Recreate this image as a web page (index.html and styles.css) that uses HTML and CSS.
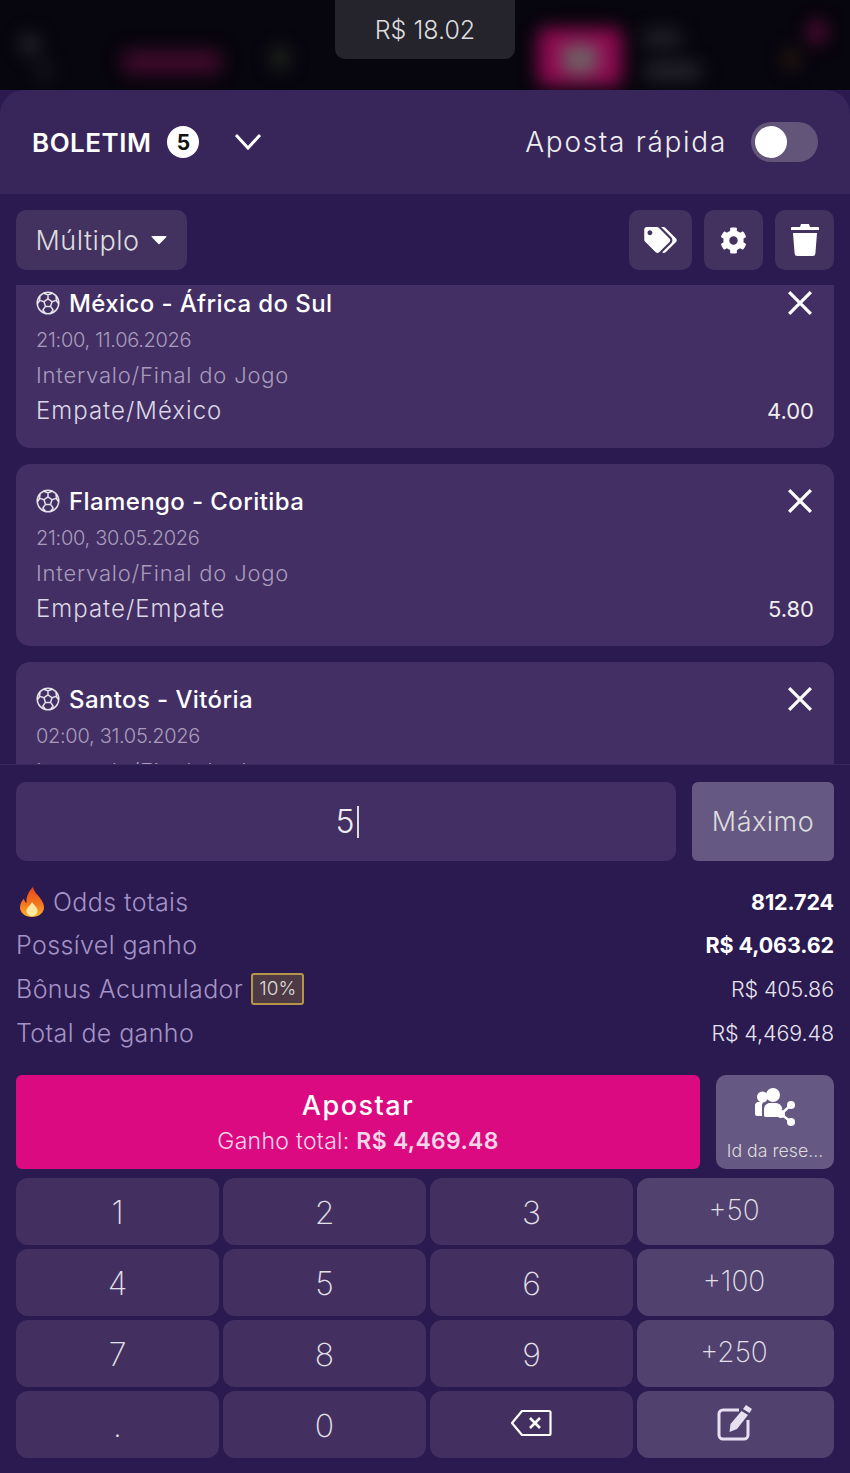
FILE: index.html
```html
<!DOCTYPE html>
<html lang="pt">
<head>
<meta charset="utf-8">
<title>Boletim</title>
<link rel="stylesheet" href="styles.css">
</head>
<body>
<div class="page">
  <div class="backdrop">
    <div class="blurs">
      <i class="blob b1"></i><i class="blob b2"></i><i class="blob b3"></i><i class="blob b4"></i>
      <i class="blob b5"></i><i class="blob b6"></i><i class="blob b7"></i><i class="blob b7b"></i><i class="blob b8"></i><i class="blob b9"></i>
    </div>
    <div class="balance">R$ 18.02</div>
  </div>
  <main class="sheet">
    <header class="sheet-head">
      <span class="title">BOLETIM</span>
      <span class="count">5</span>
      <svg class="chevron" viewBox="0 0 28 18"><path d="M2 2l12 13L26 2" fill="none" stroke="#fff" stroke-width="3"/></svg>
      <span class="quick">Aposta rápida</span>
      <span class="switch"><i class="knob"></i></span>
    </header>
    <div class="toolbar">
      <button class="tool select">Múltiplo<svg class="caret" viewBox="0 0 16 10"><path d="M1 1h14a.6.6 0 0 1 .4 1L8.6 9a.8.8 0 0 1-1.2 0L.6 2A.6.6 0 0 1 1 1z" fill="#fff"/></svg></button>
      <span class="spacer"></span>
      <button class="tool tag"><svg viewBox="0 0 640 512" class="ic-tag"><path fill="#fff" d="M497.941 225.941L286.059 14.059A48 48 0 0 0 252.118 0H48C21.49 0 0 21.49 0 48v204.118a48 48 0 0 0 14.059 33.941l211.882 211.882c18.744 18.745 49.136 18.746 67.882 0l204.118-204.118c18.745-18.745 18.745-49.137 0-67.882zM112 160c-26.51 0-48-21.49-48-48s21.49-48 48-48 48 21.49 48 48-21.49 48-48 48zm513.941 133.823L421.823 497.941c-18.745 18.745-49.137 18.745-67.882 0l-.36-.36L527.64 323.522c16.999-16.999 26.36-39.6 26.36-63.64s-9.362-46.641-26.36-63.64L331.397 0h48.721a48 48 0 0 1 33.941 14.059l211.882 211.882c18.745 18.745 18.745 49.137 0 67.882z"/></svg></button>
      <button class="tool gear"><svg viewBox="0 0 512 512" class="ic-gear"><path fill="#fff" d="M487.4 315.7l-42.6-24.6c4.3-23.2 4.3-47 0-70.2l42.6-24.6c4.9-2.8 7.1-8.6 5.5-14-11.1-35.6-30-67.8-54.7-94.6-3.8-4.1-10-5.1-14.8-2.3L380.8 110c-17.9-15.4-38.5-27.3-60.8-35.1V25.8c0-5.6-3.9-10.5-9.4-11.7-36.7-8.2-74.3-7.8-109.2 0-5.5 1.2-9.4 6.1-9.4 11.7V75c-22.2 7.9-42.8 19.8-60.8 35.1L88.7 85.5c-4.9-2.8-11-1.9-14.8 2.3-24.7 26.7-43.6 58.9-54.7 94.6-1.7 5.4.6 11.2 5.5 14L67.3 221c-4.3 23.2-4.3 47 0 70.2l-42.6 24.6c-4.9 2.8-7.1 8.6-5.5 14 11.1 35.6 30 67.8 54.7 94.6 3.8 4.1 10 5.1 14.8 2.3l42.6-24.6c17.9 15.4 38.5 27.3 60.8 35.1v49.2c0 5.6 3.9 10.5 9.4 11.7 36.7 8.2 74.3 7.8 109.2 0 5.5-1.2 9.4-6.1 9.4-11.7v-49.2c22.2-7.9 42.8-19.8 60.8-35.1l42.6 24.6c4.9 2.8 11 1.9 14.8-2.3 24.7-26.7 43.6-58.9 54.7-94.6 1.5-5.5-.7-11.3-5.6-14.1zM256 336c-44.1 0-80-35.9-80-80s35.9-80 80-80 80 35.9 80 80-35.9 80-80 80z"/></svg></button>
      <button class="tool bin"><svg viewBox="0 0 28 32" class="ic-bin"><path fill="#fff" d="M10 0h8l1 3h8a1 1 0 0 1 1 1v2H0V4a1 1 0 0 1 1-1h8zM2 9h24l-1.6 20.5A2.6 2.6 0 0 1 21.8 32H6.2a2.6 2.6 0 0 1-2.6-2.5z"/></svg></button>
    </div>
    <section class="slips">
      <div class="slip-list">
        <article class="slip">
          <div class="slip-top">
            <svg class="ball" viewBox="0 0 24 24"><g fill="none" stroke="#fff" stroke-width="1.5" stroke-opacity=".85"><circle cx="12" cy="12" r="10.8"/><path d="M12 7.8l4 2.9-1.500 4.700h-5L8 10.700zM12 7.800V3.600M16 10.700l4-1.300M14.500 15.400l2.500 3.400M9.500 15.400l-2.500 3.400M8 10.700l-4-1.300M8 2.200L12 4l4-1.800M20 5.500l.5 4.500 2 2.500M4 5.500L3.500 10l-2 2.500M6.500 18.500L9 21.800M17.500 18.500L15 21.800"/></g></svg>
            <h2 class="match">México - África do Sul</h2>
            <svg class="close" viewBox="0 0 24 24"><path d="M2 2l20 20M22 2L2 22" stroke="#fff" stroke-width="3" fill="none"/></svg>
          </div>
          <div class="when">21:00, 11.06.2026</div>
          <div class="market">Intervalo/Final do Jogo</div>
          <div class="pick"><span>Empate/México</span><span class="odd">4.00</span></div>
        </article>
        <article class="slip">
          <div class="slip-top">
            <svg class="ball" viewBox="0 0 24 24"><g fill="none" stroke="#fff" stroke-width="1.5" stroke-opacity=".85"><circle cx="12" cy="12" r="10.8"/><path d="M12 7.8l4 2.9-1.500 4.700h-5L8 10.700zM12 7.800V3.600M16 10.700l4-1.300M14.500 15.400l2.500 3.400M9.500 15.400l-2.500 3.400M8 10.700l-4-1.300M8 2.200L12 4l4-1.800M20 5.500l.5 4.500 2 2.500M4 5.500L3.500 10l-2 2.500M6.500 18.500L9 21.800M17.500 18.500L15 21.800"/></g></svg>
            <h2 class="match">Flamengo - Coritiba</h2>
            <svg class="close" viewBox="0 0 24 24"><path d="M2 2l20 20M22 2L2 22" stroke="#fff" stroke-width="3" fill="none"/></svg>
          </div>
          <div class="when">21:00, 30.05.2026</div>
          <div class="market">Intervalo/Final do Jogo</div>
          <div class="pick"><span>Empate/Empate</span><span class="odd">5.80</span></div>
        </article>
        <article class="slip">
          <div class="slip-top">
            <svg class="ball" viewBox="0 0 24 24"><g fill="none" stroke="#fff" stroke-width="1.5" stroke-opacity=".85"><circle cx="12" cy="12" r="10.8"/><path d="M12 7.8l4 2.9-1.500 4.700h-5L8 10.700zM12 7.800V3.600M16 10.700l4-1.300M14.500 15.400l2.500 3.400M9.500 15.400l-2.500 3.400M8 10.700l-4-1.300M8 2.200L12 4l4-1.800M20 5.500l.5 4.500 2 2.500M4 5.500L3.500 10l-2 2.500M6.500 18.500L9 21.800M17.500 18.500L15 21.800"/></g></svg>
            <h2 class="match">Santos - Vitória</h2>
            <svg class="close" viewBox="0 0 24 24"><path d="M2 2l20 20M22 2L2 22" stroke="#fff" stroke-width="3" fill="none"/></svg>
          </div>
          <div class="when">02:00, 31.05.2026</div>
          <div class="market">Intervalo/Final do Jogo</div>
        </article>
      </div>
    </section>
    <div class="stake-row">
      <div class="stake"><span>5</span><i class="cursor"></i></div>
      <button class="max">Máximo</button>
    </div>
    <dl class="totals">
      <div class="row">
        <dt><svg class="flame" viewBox="0 0 24 30"><defs><linearGradient id="fl" x1="0" y1="0" x2="0" y2="1"><stop offset="0" stop-color="#e8451c"/><stop offset=".6" stop-color="#f47a1f"/><stop offset="1" stop-color="#ffb52e"/></linearGradient></defs><path fill="url(#fl)" d="M13 0c1 5 4 7 7 11 3 4 4 7 4 9.500C24 26 18.500 30 12 30S0 26 0 20.500c0-4 2-7 4-9 .3 2 1 3.500 2.500 4.500C6 9 9 4 13 0z"/><path fill="#ffe9a0" d="M12 15c1.500 3 5.500 5 5.500 9 0 3-2.500 5-5.500 5s-5.500-2-5.500-5c0-4 4-5 5.500-9z"/></svg>Odds totais</dt>
        <dd class="strong">812.724</dd>
      </div>
      <div class="row"><dt>Possível ganho</dt><dd class="strong">R$ 4,063.62</dd></div>
      <div class="row"><dt>Bônus Acumulador<span class="pct">10%</span></dt><dd>R$ 405.86</dd></div>
      <div class="row"><dt>Total de ganho</dt><dd>R$ 4,469.48</dd></div>
    </dl>
    <div class="actions">
      <button class="bet"><span class="bet-title">Apostar</span><span class="bet-sub">Ganho total: <b>R$ 4,469.48</b></span></button>
      <button class="reserve">
        <svg class="ic-share" viewBox="0 0 42 38"><g fill="#fff"><circle cx="8.500" cy="9" r="5.500"/><path d="M1 17c0-1.500 1.500-3 3-3h5l-1 3v11H3c-1 0-2-1-2-2z"/><circle cx="19" cy="7" r="7"/><path d="M10 22c0-5 3-7 6-7h6c3 0 5.500 2 6.500 6L24 24.500V29H12c-1.500 0-2-1-2-2z"/><circle cx="37" cy="17" r="4"/><circle cx="27" cy="26" r="4"/><circle cx="37" cy="34" r="4"/></g><path d="M37 17L27 26l10 8" fill="none" stroke="#fff" stroke-width="2.500"/></svg>
        <span class="reserve-label">Id da rese...</span>
      </button>
    </div>
    <div class="keypad">
      <button class="key">1</button><button class="key">2</button><button class="key">3</button><button class="key alt">+50</button>
      <button class="key">4</button><button class="key">5</button><button class="key">6</button><button class="key alt">+100</button>
      <button class="key">7</button><button class="key">8</button><button class="key">9</button><button class="key alt">+250</button>
      <button class="key">.</button><button class="key">0</button>
      <button class="key icon"><svg class="ic-back" viewBox="0 0 42 28"><path d="M12 2h27a1.500 1.500 0 0 1 1.500 1.500v21A1.500 1.500 0 0 1 39 26H12L2 14z" fill="none" stroke="#fff" stroke-width="2.200" stroke-linejoin="round"/><path d="M20 9l10 10M30 9L20 19" stroke="#fff" stroke-width="2.600" fill="none"/></svg></button>
      <button class="key alt icon"><svg class="ic-edit" viewBox="0 0 36 36"><path d="M22 5H6a4 4 0 0 0-4 4v21a4 4 0 0 0 4 4h21a4 4 0 0 0 4-4V15" fill="none" stroke="#e6e0f0" stroke-width="3"/><path fill="#e6e0f0" d="M29 0l6 4-2.500 4-6.500-4zM24.500 6l6.500 4-11 14-7.500 3 1-8z"/></svg></button>
    </div>
  </main>
</div>
</body>
</html>
```
FILE: styles.css
```css
* { box-sizing: border-box; }
html, body { margin: 0; padding: 0; }
body { background: #2a1a4f; font-family: "Inter", "Liberation Sans", sans-serif; color: #fff; font-weight: 300; }
button { font: inherit; color: inherit; border: 0; padding: 0; }
.page { width: 850px; height: 1473px; overflow: hidden; display: flex; flex-direction: column; }

.backdrop { position: relative; height: 90px; background: #07050e; display: flex; justify-content: center; align-items: flex-start; flex: none; overflow: hidden; }
.blurs { position: absolute; inset: 0; filter: blur(9px); }
.blob { position: absolute; display: block; border-radius: 8px; }
.b1 { left: 20px; top: 34px; width: 20px; height: 20px; background: #2a292e; border-radius: 50%; }
.b2 { left: 36px; top: 60px; width: 16px; height: 20px; background: #1a191e; border-radius: 50%; }
.b3 { left: 122px; top: 50px; width: 100px; height: 24px; background: #3f0a2c; }
.b4 { left: 270px; top: 46px; width: 20px; height: 24px; background: #20261c; border-radius: 50%; }
.b5 { left: 538px; top: 28px; width: 84px; height: 58px; background: #8f0a50; }
.b6 { left: 562px; top: 44px; width: 36px; height: 30px; background: #6e5f64; }
.b7 { left: 642px; top: 30px; width: 40px; height: 16px; background: #25232a; }
.b7b { left: 644px; top: 62px; width: 58px; height: 18px; background: #25232a; }
.b8 { left: 808px; top: 20px; width: 18px; height: 24px; background: #5c0b3c; border-radius: 50%; }
.b9 { left: 784px; top: 48px; width: 14px; height: 22px; background: #2f1f0f; border-radius: 50%; }
.balance { position: relative; width: 180px; height: 59px; background: #25232c; border-radius: 0 0 10px 10px; display: flex; align-items: center; justify-content: center; font-size: 25px; color: #ddd; }

.sheet { flex: 1; min-height: 0; background: #2a1a4f; border-radius: 24px 24px 0 0; overflow: hidden; display: flex; flex-direction: column; }
.sheet-head { height: 104px; flex: none; background: #38265a; display: flex; align-items: center; padding: 0 32px; }
.title { font-size: 26px; font-weight: 600; letter-spacing: .5px; }
.count { width: 32px; height: 32px; margin-left: 16px; border-radius: 50%; background: #fff; color: #111; font-size: 21px; font-weight: 700; display: flex; align-items: center; justify-content: center; }
.chevron { width: 28px; height: 18px; margin-left: 35px; }
.quick { margin-left: auto; font-size: 28px; letter-spacing: 1.700px; color: #eee; }
.switch { width: 67px; height: 40px; margin-left: 24px; border-radius: 20px; background: #625579; display: flex; align-items: center; padding-left: 4px; }
.knob { width: 32px; height: 32px; border-radius: 50%; background: #fff; display: block; }

.toolbar { display: flex; gap: 12px; padding: 16px 16px 0; height: 91px; flex: none; }
.tool { height: 60px; background: #433260; border-radius: 10px; display: flex; align-items: center; justify-content: center; }
.select { width: 171px; font-size: 27px; letter-spacing: .5px; color: #ddd; gap: 12px; }
.caret { width: 16px; height: 10px; }
.spacer { flex: 1; }
.tag { width: 63px; }
.gear { width: 59px; }
.bin { width: 59px; }
.ic-tag { width: 33px; height: 26px; }
.ic-gear { width: 27px; height: 27px; }
.ic-bin { width: 28px; height: 32px; }

.slips { height: 480px; flex: none; overflow: hidden; border-bottom: 1px solid #3b2b5c; padding: 0 16px; }
.slip-list { margin-top: -19px; display: flex; flex-direction: column; gap: 16px; }
.slip { height: 182px; background: #432f63; border-radius: 14px; padding: 20px 20px 0; flex: none; }
.slip-top { display: flex; align-items: center; height: 34px; }
.ball { width: 24px; height: 24px; margin-right: 9px; }
.match { margin: 0; font-size: 24px; font-weight: 500; letter-spacing: .4px; color: #fff; }
.close { width: 26px; height: 26px; margin-left: auto; margin-right: 1px; }
.when { margin-top: 3px; height: 34px; line-height: 35px; font-size: 20px; color: #a89cbd; letter-spacing: -.3px; }
.market { height: 36px; line-height: 36px; font-size: 22px; letter-spacing: .8px; color: #a89cbd; }
.pick { height: 35px; display: flex; justify-content: space-between; align-items: center; font-size: 24px; letter-spacing: 1px; color: #dcd6e6; }
.odd { font-size: 22px; font-weight: 400; letter-spacing: 0; color: #eee; }

.stake-row { display: flex; gap: 16px; padding: 17px 16px 0; flex: none; }
.stake { flex: 1; height: 79px; padding-left: 3px; background: #432f63; border-radius: 10px; display: flex; align-items: center; justify-content: center; gap: 3px; font-size: 32px; color: #eee; }
.cursor { width: 2px; height: 32px; background: #ddd; display: block; }
.max { width: 142px; height: 79px; background: #655882; border-radius: 6px; font-size: 27px; letter-spacing: .5px; color: #ddd; }

.totals { margin: 19px 0 0; padding: 0 16px; flex: none; }
.row { height: 43.600px; display: flex; justify-content: space-between; align-items: center; font-size: 25px; letter-spacing: .4px; color: #a493c6; }
.row dt { display: flex; align-items: center; }
.row dd { margin: 0; font-size: 21.500px; letter-spacing: -.1px; color: #e8e4ef; }
.row dd.strong { font-weight: 700; color: #fff; }
.flame { width: 26px; height: 30px; margin: 0 8px 0 3px; }
.pct { margin-left: 8px; width: 53px; height: 32px; border: 2px solid #b5954a; border-radius: 3px; background: #4d3a44; font-size: 19px; letter-spacing: 0; color: #ddd; display: flex; align-items: center; justify-content: center; }

.actions { display: flex; gap: 16px; padding: 21px 16px 0; flex: none; }
.bet { flex: 1; height: 94px; padding-top: 2px; background: #dc0a80; border-radius: 6px; display: flex; flex-direction: column; align-items: center; justify-content: center; }
.bet-title { font-size: 27px; font-weight: 500; letter-spacing: 1.500px; line-height: 36px; }
.bet-sub { font-size: 23px; letter-spacing: .3px; line-height: 34px; color: #f5d5e8; }
.bet-sub b { font-weight: 600; }
.reserve { width: 118px; height: 94px; background: #655882; border-radius: 10px; display: flex; flex-direction: column; align-items: center; padding-top: 13px; }
.ic-share { width: 42px; height: 38px; }
.reserve-label { margin-top: 14px; font-size: 17.700px; color: #ddd; white-space: nowrap; }

.keypad { display: grid; grid-template-columns: 203px 203px 203px 197px; grid-auto-rows: 67px; gap: 4px; padding: 9px 16px 0; flex: none; }
.key { background: #433060; border-radius: 12px; padding-top: 2px; font-size: 32px; font-weight: 200; color: #e4e0ea; display: flex; align-items: center; justify-content: center; }
.key.alt { background: #50416f; padding: 0 3px 3px 0; font-size: 28px; }
.key.icon { padding: 0 2px 4px 0; }
.ic-back { width: 42px; height: 28px; }
.ic-edit { width: 36px; height: 36px; }
```
